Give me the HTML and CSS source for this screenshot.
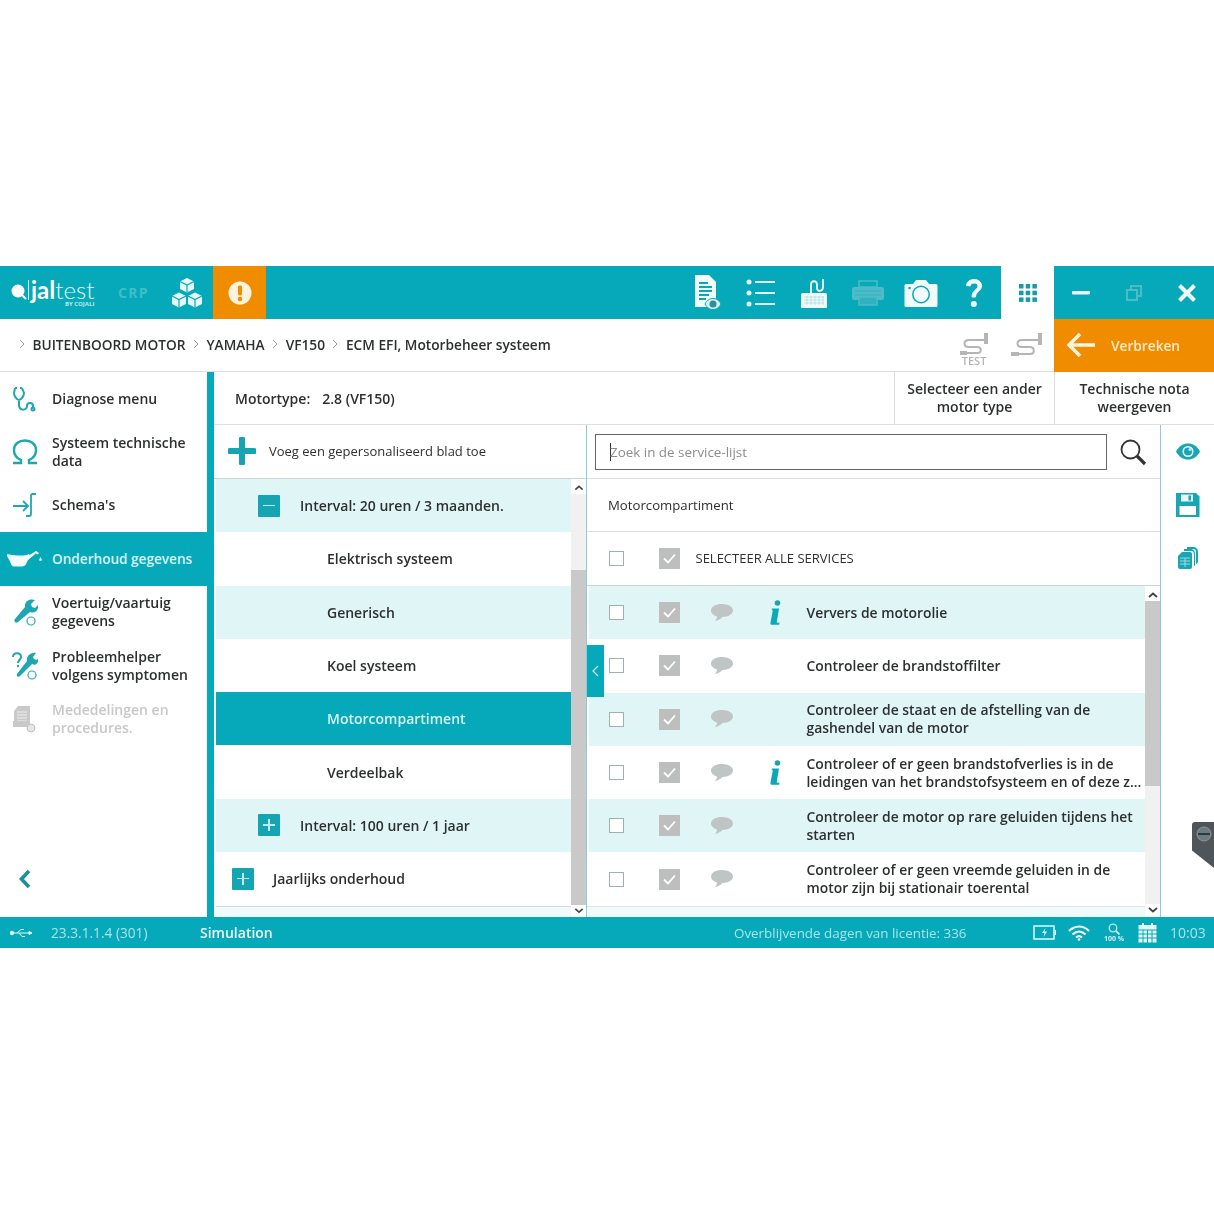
FILE: index.html
```html
<!DOCTYPE html>
<html lang="nl">
<head>
    <meta charset="UTF-8">
    <title>Jaltest - Onderhoud gegevens</title>
    <link rel="stylesheet" href="styles.css">
</head>
<body>
    <svg class="sprite" width="0" height="0">
        <symbol id="bubble" viewBox="0 0 24 20">
            <path d="M12 1C5.800 1 1 3.700 1 7.500c0 2.700 2.500 5 6 5.900 0 1.700-.8 3.300-2 4.600 3-.5 5.600-2 7.300-4 6 0 10.700-2.900 10.700-6.500S18.200 1 12 1z" fill="#bfc4c4"/>
        </symbol>
        <symbol id="info" viewBox="0 0 14 26">
            <circle cx="8.500" cy="3" r="2.800" fill="#2a9ea8"/>
            <path d="M3 8.500h7L7.800 21.500c-.2 1.300.5 1.500 2.700.9l-.3 2.300H3.200c-1.500 0-2-.8-1.700-2.300L3.800 10.500 2.800 10z" fill="#0aa9b8"/>
        </symbol>
        <symbol id="chev-up" viewBox="0 0 10 6">
            <path d="M1 5l4-3.500L9 5" fill="none" stroke="#444" stroke-width="1.800"/>
        </symbol>
        <symbol id="chev-down" viewBox="0 0 10 6">
            <path d="M1 1l4 3.500L9 1" fill="none" stroke="#444" stroke-width="1.800"/>
        </symbol>
    </svg>

    <div class="app">
        <header class="topbar">
            <div class="logo">
                <svg class="logo-mark" width="18" height="24" viewBox="0 0 18 24"><circle cx="8" cy="10" r="6.500" fill="#fff"/><path d="M12 14l4 4" stroke="#fff" stroke-width="2"/></svg>
                <div class="logo-text"><span class="logo-name"><b>jal</b>test</span><span class="logo-by">BY COJALI</span></div>
            </div>
            <div class="crp">CRP</div>
            <div class="tool">
                <svg width="34" height="32" viewBox="0 0 34 32" fill="#e6f7f8"><path d="M17 1l7 3.500v7.500l-7 3.500-7-3.500V4.500z"/><path d="M9 15.500l7 3.500v8l-7 3.500-7-3.500v-8z"/><path d="M25 15.500l7 3.500v8l-7 3.500-7-3.500v-8z"/><path d="M10 4.500l7 3.500 7-3.500M2 19l7 3.500 7-3.500M18 19l7 3.500 7-3.500M17 8v7M9 22.500v8M25 22.500v8" fill="none" stroke="#06a9b9" stroke-width="1.200"/></svg>
            </div>
            <div class="alert">
                <svg width="24" height="24" viewBox="0 0 24 24"><circle cx="12" cy="12" r="11.500" fill="#fdf3dc"/><rect x="10" y="4.500" width="4" height="10" rx="1.500" fill="#f08c00"/><circle cx="12" cy="18" r="2.200" fill="#f08c00"/></svg>
            </div>
            <div class="spacer"></div>
            <div class="tool">
                <svg width="30" height="36" viewBox="0 0 30 36"><path d="M2 0h14l7 7v25H2z" fill="#f2fbfc"/><path d="M6 8h9M6 12h13M6 16h13M6 20h10M6 24h7" stroke="#06a9b9" stroke-width="1.800"/><path d="M12 29c2-4 5-5.500 8-5.500s6 1.500 8 5.500c-2 4-5 5.500-8 5.500s-6-1.500-8-5.500z" fill="#d9eef0" stroke="#06a9b9"/><circle cx="20" cy="29" r="3.500" fill="#2c8f9a"/></svg>
            </div>
            <div class="tool">
                <svg width="30" height="30" viewBox="0 0 30 30" fill="#e6f7f8"><circle cx="3" cy="4" r="2.500"/><circle cx="3" cy="15" r="2.500"/><circle cx="3" cy="26" r="2.500"/><rect x="9" y="3" width="20" height="2"/><rect x="9" y="14" width="20" height="2"/><rect x="9" y="25" width="20" height="2"/></svg>
            </div>
            <div class="tool">
                <svg width="28" height="32" viewBox="0 0 28 32"><path d="M1 18a2 2 0 012-2h22a2 2 0 012 2v12a1 1 0 01-1 1H2a1 1 0 01-1-1z" fill="#f2fbfc"/><path d="M4 20h20M4 23h20M4 26h20M7 19v9M11 19v9M15 19v9M19 19v9M23 19v9" stroke="#a7d9de" stroke-width=".7"/><path d="M11 16V8c0-5 6-5 6 0v3c0 4 6 4 6-1V2" fill="none" stroke="#f2fbfc" stroke-width="1.800"/></svg>
            </div>
            <div class="tool">
                <svg width="34" height="26" viewBox="0 0 34 26"><path d="M8 1h18v6H8z" fill="none" stroke="#4dbcc8" stroke-width="1.500"/><rect x="1" y="7" width="32" height="13" rx="2" fill="#4dbcc8"/><path d="M4 11h26M4 15h26" stroke="#2fb2c0"/><path d="M8 17h18v8H8z" fill="#2fb2c0" stroke="#4dbcc8" stroke-width="1.500"/></svg>
            </div>
            <div class="tool">
                <svg width="34" height="28" viewBox="0 0 34 28"><path d="M2 5h7l3-4h10l3 4h7a1.500 1.500 0 011.500 1.500v20A1.500 1.500 0 0132 28H2a1.500 1.500 0 01-1.500-1.500v-20A1.500 1.500 0 012 5z" fill="#f2fbfc"/><circle cx="17" cy="15.500" r="9" fill="#06a9b9"/><circle cx="17" cy="15.500" r="7.500" fill="#f2fbfc"/><circle cx="5.500" cy="9" r="1.300" fill="#06a9b9"/></svg>
            </div>
            <div class="tool">
                <svg width="20" height="32" viewBox="0 0 20 32"><path d="M2.500 8.500C3 4.500 6 2.500 10 2.500s7.500 2.300 7.500 6.300c0 5.700-6 5.500-6 11.200H8c0-7 6-7.200 6-11 0-2-1.700-3-3.800-3s-3.700 1-4 3z" fill="#f2fbfc" stroke="#f2fbfc"/><circle cx="9.800" cy="27" r="3" fill="#f2fbfc"/></svg>
            </div>
            <div class="apps">
                <svg width="18" height="18" viewBox="0 0 18 18" fill="#199aa8"><rect width="4.500" height="4.500"/><rect x="6.700" width="4.500" height="4.500"/><rect x="13.400" width="4.500" height="4.500"/><rect y="6.700" width="4.500" height="4.500"/><rect x="6.700" y="6.700" width="4.500" height="4.500"/><rect x="13.400" y="6.700" width="4.500" height="4.500"/><rect y="13.400" width="4.500" height="4.500"/><rect x="6.700" y="13.400" width="4.500" height="4.500"/><rect x="13.400" y="13.400" width="4.500" height="4.500"/></svg>
            </div>
            <div class="window-btns">
                <div class="tool"><svg width="18" height="4" viewBox="0 0 18 4"><rect width="18" height="3.500" rx="1" fill="#e6f7f8"/></svg></div>
                <div class="tool"><svg width="16" height="16" viewBox="0 0 16 16" fill="none" stroke="#4dbcc8" stroke-width="2"><rect x="5" y="1" width="10" height="10"/><rect x="1" y="5" width="10" height="10" fill="#06a9b9"/></svg></div>
                <div class="tool"><svg width="20" height="20" viewBox="0 0 20 20"><path d="M2.500 2.500l15 15M17.500 2.500l-15 15" stroke="#f2fbfc" stroke-width="4"/></svg></div>
            </div>
        </header>

        <div class="crumbbar">
            <nav class="crumbs">
                <svg class="crumb-sep" width="6" height="10" viewBox="0 0 6 10"><path d="M1 1l4 4-4 4" fill="none" stroke="#999"/></svg>
                <span>BUITENBOORD MOTOR</span>
                <svg class="crumb-sep" width="6" height="10" viewBox="0 0 6 10"><path d="M1 1l4 4-4 4" fill="none" stroke="#999"/></svg>
                <span>YAMAHA</span>
                <svg class="crumb-sep" width="6" height="10" viewBox="0 0 6 10"><path d="M1 1l4 4-4 4" fill="none" stroke="#999"/></svg>
                <span>VF150</span>
                <svg class="crumb-sep" width="6" height="10" viewBox="0 0 6 10"><path d="M1 1l4 4-4 4" fill="none" stroke="#999"/></svg>
                <span>ECM EFI, Motorbeheer systeem</span>
            </nav>
            <div class="spacer"></div>
            <div class="tool">
                <div class="test-icon">
                    <svg width="30" height="24" viewBox="0 0 30 24" fill="none" stroke="#b5b5b5" stroke-width="2"><path d="M26 8H10c-6 0-6 7 0 7h8c5 0 5 6 0 6H8"/><rect x="25" y="1" width="4" height="11" fill="#b5b5b5" stroke="none"/><rect x="1" y="19" width="7" height="4" fill="#b5b5b5" stroke="none"/></svg>
                    <span>TEST</span>
                </div>
            </div>
            <div class="tool">
                <svg width="34" height="28" viewBox="0 0 34 28" fill="none" stroke="#b5b5b5" stroke-width="2"><path d="M28 8H12c-6 0-6 7 0 7h8c5 0 5 7 0 7H9"/><rect x="28" y="1" width="4" height="12" fill="#b5b5b5" stroke="none"/><rect x="1" y="20" width="8" height="4" fill="#b5b5b5" stroke="none"/></svg>
            </div>
            <div class="disconnect">
                <svg width="30" height="26" viewBox="0 0 30 26" fill="none" stroke="#fdf3dc" stroke-width="3.500"><path d="M29 13H4M14 2L3 13l11 11"/></svg>
                <span>Verbreken</span>
            </div>
        </div>

        <div class="content">
            <aside class="sidebar">
                <div class="side-item">
                    <svg width="24" height="26" viewBox="0 0 24 26" fill="none" stroke="#1ea6b3" stroke-width="2"><path d="M3 2l-1 5c0 3 3 7 5 7s5-4 5-7l-2-5M3 2h2M8 2h2M7 14v5c0 6 8 6 8 1 0-4 6-4 6 0v2"/><circle cx="21" cy="23" r="1.500"/></svg>
                    <span>Diagnose menu</span>
                </div>
                <div class="side-item">
                    <svg width="26" height="26" viewBox="0 0 26 26" fill="none" stroke="#1ea6b3" stroke-width="2.400"><path d="M1 24h8v-3C4 19 2 15 2 11 2 5 7 1.500 13 1.500S24 5 24 11c0 4-2 8-7 10v3h8"/></svg>
                    <span>Systeem technische data</span>
                </div>
                <div class="side-item">
                    <svg width="26" height="26" viewBox="0 0 26 26" fill="none" stroke="#1ea6b3" stroke-width="1.800"><path d="M1 14h15M11 9l5 5-5 5M24 2h-3c-1 0-2 1-2 2v18c0 1-1 2-2 2h-3"/></svg>
                    <span>Schema's</span>
                </div>
                <div class="side-item active">
                    <svg width="36" height="18" viewBox="0 0 36 18" fill="#f2fbfc"><path d="M1 4c5 1 10 1.500 14 1.500 3 0 6-.5 8-1.500l1 2-4 8c-.7 1.500-2 2.500-4 2.500H8c-2 0-3-2-4-5L1 6z"/><path d="M21 6.500L30 1l3 2-1.200 1.500-2-1L22 10z"/><path d="M34.500 7l1.500 3a1.600 1.600 0 01-3 0z"/></svg>
                    <span>Onderhoud gegevens</span>
                </div>
                <div class="side-item">
                    <svg width="26" height="28" viewBox="0 0 26 28"><path d="M23 2l-4 4 1 3 3 1 3-3c1 5-3 9-8 7L6 24c-2 2-5-1-3-3L13 9c-1-5 4-9 10-7z" fill="#1ea6b3"/><circle cx="19" cy="23" r="4" fill="none" stroke="#2aa8b4" stroke-width="1.200"/></svg>
                    <span>Voertuig/vaartuig gegevens</span>
                </div>
                <div class="side-item">
                    <svg width="26" height="28" viewBox="0 0 26 28"><path d="M24 1l-3 4 1 2 3 1 1-2c1 5-2 8-6 6L8 24c-2 2-4 0-3-2L15 9c-1-5 4-9 9-8z" fill="#1ea6b3"/><path d="M1 5c0-5 8-5 8 0 0 3-3 3-3 6" fill="none" stroke="#1ea6b3" stroke-width="2"/><circle cx="6" cy="14" r="1.200" fill="#1ea6b3"/><circle cx="20" cy="23" r="4" fill="none" stroke="#2aa8b4" stroke-width="1.200"/></svg>
                    <span>Probleemhelper volgens symptomen</span>
                </div>
                <div class="side-item disabled">
                    <svg width="24" height="28" viewBox="0 0 24 28"><path d="M6 1h12v20H2V6z" fill="#c9c9c9"/><path d="M5 7h10M5 10h10M5 13h10M5 16h10" stroke="#f0f0f0"/><path d="M1 16h15v6H1z" fill="#c9c9c9"/><circle cx="19" cy="23" r="4" fill="#e6e6e6" stroke="#c0c0c0"/></svg>
                    <span>Mededelingen en procedures.</span>
                </div>
                <div class="spacer"></div>
                <div class="side-back">
                    <svg width="14" height="20" viewBox="0 0 14 20" fill="none"><path d="M11 2L3.500 10l7.500 8" stroke="#1b8f9b" stroke-width="3.600"/></svg>
                </div>
            </aside>

            <main class="work">
                <div class="motor-row">
                    <div class="motor-type"><span>Motortype:</span><span>2.8 (VF150)</span></div>
                    <div class="motor-btn">Selecteer een ander motor type</div>
                    <div class="motor-btn">Technische nota weergeven</div>
                </div>

                <div class="panels">
                    <section class="tree-panel">
                        <div class="add-row">
                            <svg width="28" height="28" viewBox="0 0 28 28"><path d="M14 2v24M2 14h24" stroke="#15a4b2" stroke-width="6" stroke-linecap="round"/></svg>
                            <span>Voeg een gepersonaliseerd blad toe</span>
                        </div>
                        <div class="tree-body">
                            <div class="tree-list">
                                <div class="tree-row tint level-1"><div class="toggle"><i class="minus"></i></div><span>Interval: 20 uren / 3 maanden.</span></div>
                                <div class="tree-row level-2"><span>Elektrisch systeem</span></div>
                                <div class="tree-row tint level-2"><span>Generisch</span></div>
                                <div class="tree-row level-2"><span>Koel systeem</span></div>
                                <div class="tree-row selected level-2"><span>Motorcompartiment</span></div>
                                <div class="tree-row level-2"><span>Verdeelbak</span></div>
                                <div class="tree-row tint level-1"><div class="toggle"><i class="minus"></i><i class="vert"></i></div><span>Interval: 100 uren / 1 jaar</span></div>
                                <div class="tree-row level-0"><div class="toggle"><i class="minus"></i><i class="vert"></i></div><span>Jaarlijks onderhoud</span></div>
                                <div class="tree-foot"></div>
                            </div>
                            <div class="scrollbar tree-scroll">
                                <svg width="10" height="6"><use href="#chev-up"/></svg>
                                <div class="track"><div class="thumb"></div></div>
                                <svg width="10" height="6"><use href="#chev-down"/></svg>
                            </div>
                        </div>
                    </section>

                    <section class="service-panel">
                        <div class="search-row">
                            <div class="search-box"><span class="caret"></span>Zoek in de service-lijst</div>
                            <svg width="28" height="28" viewBox="0 0 28 28" fill="none" stroke="#333"><circle cx="11.500" cy="11.500" r="9" stroke-width="1.800"/><path d="M18 18l8 8" stroke-width="3.200"/></svg>
                        </div>
                        <div class="group-title">Motorcompartiment</div>
                        <div class="select-all">
                            <div class="box"></div>
                            <div class="check"><svg width="13" height="11" viewBox="0 0 13 11"><path d="M1 5.500l4 4 7-8" fill="none" stroke="#fff" stroke-width="1.800"/></svg></div>
                            <span>SELECTEER ALLE SERVICES</span>
                        </div>
                        <div class="service-body">
                            <div class="service-list">
                                <div class="service-row tint">
                                    <div class="box"></div>
                                    <div class="check"><svg width="13" height="11" viewBox="0 0 13 11"><path d="M1 5.500l4 4 7-8" fill="none" stroke="#fff" stroke-width="1.800"/></svg></div>
                                    <svg class="bubble" width="24" height="20"><use href="#bubble"/></svg>
                                    <div class="info-slot"><svg width="14" height="26"><use href="#info"/></svg></div>
                                    <p>Ververs de motorolie</p>
                                </div>
                                <div class="service-row">
                                    <div class="box"></div>
                                    <div class="check"><svg width="13" height="11" viewBox="0 0 13 11"><path d="M1 5.500l4 4 7-8" fill="none" stroke="#fff" stroke-width="1.800"/></svg></div>
                                    <svg class="bubble" width="24" height="20"><use href="#bubble"/></svg>
                                    <div class="info-slot"></div>
                                    <p>Controleer de brandstoffilter</p>
                                </div>
                                <div class="service-row tint">
                                    <div class="box"></div>
                                    <div class="check"><svg width="13" height="11" viewBox="0 0 13 11"><path d="M1 5.500l4 4 7-8" fill="none" stroke="#fff" stroke-width="1.800"/></svg></div>
                                    <svg class="bubble" width="24" height="20"><use href="#bubble"/></svg>
                                    <div class="info-slot"></div>
                                    <p>Controleer de staat en de afstelling van de gashendel van de motor</p>
                                </div>
                                <div class="service-row">
                                    <div class="box"></div>
                                    <div class="check"><svg width="13" height="11" viewBox="0 0 13 11"><path d="M1 5.500l4 4 7-8" fill="none" stroke="#fff" stroke-width="1.800"/></svg></div>
                                    <svg class="bubble" width="24" height="20"><use href="#bubble"/></svg>
                                    <div class="info-slot"><svg width="14" height="26"><use href="#info"/></svg></div>
                                    <p>Controleer of er geen brandstofverlies is in de<br>leidingen van het brandstofsysteem en of deze z...</p>
                                </div>
                                <div class="service-row tint">
                                    <div class="box"></div>
                                    <div class="check"><svg width="13" height="11" viewBox="0 0 13 11"><path d="M1 5.500l4 4 7-8" fill="none" stroke="#fff" stroke-width="1.800"/></svg></div>
                                    <svg class="bubble" width="24" height="20"><use href="#bubble"/></svg>
                                    <div class="info-slot"></div>
                                    <p>Controleer de motor op rare geluiden tijdens het starten</p>
                                </div>
                                <div class="service-row">
                                    <div class="box"></div>
                                    <div class="check"><svg width="13" height="11" viewBox="0 0 13 11"><path d="M1 5.500l4 4 7-8" fill="none" stroke="#fff" stroke-width="1.800"/></svg></div>
                                    <svg class="bubble" width="24" height="20"><use href="#bubble"/></svg>
                                    <div class="info-slot"></div>
                                    <p>Controleer of er geen vreemde geluiden in de motor zijn bij stationair toerental</p>
                                </div>
                                <div class="service-foot"></div>
                            </div>
                            <div class="scrollbar service-scroll">
                                <svg width="10" height="6"><use href="#chev-up"/></svg>
                                <div class="track"><div class="thumb"></div></div>
                                <svg width="10" height="6"><use href="#chev-down"/></svg>
                            </div>
                        </div>
                        <div class="collapse-tab">
                            <svg width="7" height="12" viewBox="0 0 7 12"><path d="M6 1L1 6l5 5" fill="none" stroke="#cdeef1" stroke-width="1.200"/></svg>
                        </div>
                    </section>

                    <aside class="rail">
                        <div class="rail-btn">
                            <svg width="26" height="17" viewBox="0 0 26 17"><path d="M1 8.500C4 3 8 .5 13 .5s9 2.500 12 8c-3 5.500-7 8-12 8s-9-2.500-12-8z" fill="#17a6b4"/><circle cx="13" cy="8.500" r="5.500" fill="#fff"/><circle cx="13" cy="8.500" r="4" fill="#17a6b4"/><circle cx="15" cy="6.500" r="1.500" fill="#bfe9ed"/></svg>
                        </div>
                        <div class="rail-btn">
                            <svg width="25" height="26" viewBox="0 0 25 26"><path d="M1 1h20l3.500 3.500V25H1z" fill="#17a6b4"/><rect x="6" y="2.500" width="12" height="7" fill="#e9f8f9"/><rect x="13.500" y="3.500" width="2.500" height="5" fill="#17a6b4"/><rect x="4.500" y="14" width="16.500" height="9" fill="#fff"/></svg>
                        </div>
                        <div class="rail-btn">
                            <svg width="20" height="22" viewBox="0 0 20 22" fill="#17a6b4"><path d="M9 0h6c3 0 5 2 5 5v9c0 2-1 3-2 3V5c0-2-1-3-3-3H9z"/><path d="M6 2h7c2 0 4 2 4 4v11c0 1 0 2-1 2V7c0-2-1-3-3-3H6z"/><path d="M4 5h8a2 2 0 012 2v13a2 2 0 01-2 2H2a2 2 0 01-2-2V9z"/><path d="M2 11h10M2 14h10M2 17h10M7 11v9" stroke="#bfe9ed" stroke-width=".8"/></svg>
                        </div>
                    </aside>
                </div>
            </main>
        </div>

        <footer class="statusbar">
            <svg class="usb" width="22" height="10" viewBox="0 0 22 10" fill="none" stroke="#e6f7f8"><circle cx="2" cy="5" r="1.800" fill="#e6f7f8"/><path d="M3 5h17M7 5l4-3.500h3M9 5l3 3.500h3"/><path d="M19 3.500l3 1.500-3 1.500z" fill="#e6f7f8"/></svg>
            <span class="version">23.3.1.1.4 (301)</span>
            <span class="sim">Simulation</span>
            <span class="license">Overblijvende dagen van licentie: 336</span>
            <div class="status-icons">
                <svg width="23" height="15" viewBox="0 0 23 15" fill="none" stroke="#e6f7f8" stroke-width="1.500"><rect x="1" y="1" width="20" height="13"/><path d="M22.500 5v5"/><path d="M12.500 3L9 8h2.500l-1 4 3.500-5.500h-2.500z" fill="#e6f7f8" stroke="none"/></svg>
                <svg width="22" height="16" viewBox="0 0 22 16" fill="none" stroke="#f2fbfc" stroke-width="2.200"><path d="M1 6c6-6 14-6 20 0M4.500 9.500c4-4 9-4 13 0M8 12.500c2-1.700 4-1.700 6 0"/><circle cx="11" cy="14.500" r="1.300" fill="#f2fbfc" stroke="none"/></svg>
                <div class="zoom-level">
                    <svg width="12" height="12" viewBox="0 0 12 12" fill="none" stroke="#bfe9ed" stroke-width="1.300"><circle cx="5" cy="5" r="3.800"/><path d="M8 8l3.500 3.500" stroke-width="1.800"/></svg>
                    <span>100 %</span>
                </div>
                <svg width="19" height="20" viewBox="0 0 19 20"><rect x="0.500" y="2" width="18" height="17.500" fill="#e6f7f8"/><path d="M0 7h19M0 11h19M0 15h19M5 7v13M9.500 7v13M14 7v13" stroke="#06a9b9"/><path d="M5 0v4M14 0v4" stroke="#e6f7f8" stroke-width="2"/></svg>
            </div>
            <span class="clock">10:03</span>
        </footer>

        <div class="remote-tab">
            <svg width="16" height="16" viewBox="0 0 16 16"><circle cx="8" cy="8" r="7" fill="#6d7a80" stroke="#8b979c"/><path d="M2 8h12" stroke="#2c3a40" stroke-width="2"/></svg>
        </div>
    </div>
</body>
</html>
```

FILE: styles.css
```css
* {
    margin: 0;
    padding: 0;
    box-sizing: border-box;
}

body {
    font-family: "Open Sans", "Liberation Sans", sans-serif;
    font-size: 14px;
    color: #2d3031;
    background: #fff;
    padding-top: 266px;
}

.sprite {
    position: absolute;
}

.app {
    position: relative;
    width: 1214px;
    height: 682px;
    display: flex;
    flex-direction: column;
    filter: blur(0.35px);
}

.spacer {
    flex: 1;
}

.tool {
    width: 53.3px;
    height: 53px;
    display: flex;
    align-items: center;
    justify-content: center;
    flex-shrink: 0;
}

/* header */
.topbar {
    height: 53px;
    display: flex;
    background: #06a9b9;
    flex-shrink: 0;
}

.logo {
    width: 117px;
    display: flex;
    align-items: center;
    padding-left: 10px;
}

.logo-mark {
    flex-shrink: 0;
}

.logo-text {
    display: flex;
    flex-direction: column;
    align-items: flex-end;
    margin-top: 3px;
}

.logo-name {
    font-family: "Lato", sans-serif;
    font-size: 24px;
    line-height: 20px;
    font-weight: 300;
    color: #e6f7f8;
    border-left: 1.5px solid #e6f7f8;
    padding-left: 2px;
}

.logo-name b {
    font-weight: 700;
    color: #fff;
}

.logo-by {
    font-size: 6px;
    line-height: 7px;
    margin-top: 1px;
    font-weight: 700;
    color: #bfe9ed;
}

.crp {
    width: 43px;
    padding-left: 1px;
    line-height: 53px;
    font-size: 14px;
    font-weight: 700;
    letter-spacing: 1.300px;
    color: #3fbecb;
}

.alert {
    width: 53px;
    background: #f08c00;
    display: flex;
    align-items: center;
    justify-content: center;
}

.apps {
    width: 53px;
    background: #fff;
    display: flex;
    align-items: center;
    justify-content: center;
}

.window-btns {
    width: 160px;
    display: flex;
}

/* breadcrumb */
.crumbbar {
    height: 53px;
    display: flex;
    align-items: stretch;
    border-bottom: 1px solid #dcdedf;
    flex-shrink: 0;
}

.crumbs {
    display: flex;
    align-items: center;
    gap: 7.500px;
    padding-left: 19px;
    padding-bottom: 2px;
    font-weight: 600;
    font-size: 13.700px;
}

.test-icon {
    display: flex;
    flex-direction: column;
    align-items: center;
    margin-top: 5px;
}

.test-icon span {
    font-size: 11px;
    line-height: 9px;
    font-weight: 600;
    color: #b5b5b5;
}

.disconnect {
    width: 160px;
    margin-bottom: -1px;
    background: #f08c00;
    display: flex;
    align-items: center;
    gap: 15px;
    padding-left: 12px;
    padding-bottom: 1px;
    font-weight: 600;
    font-size: 13.700px;
    color: #fdeccb;
    position: relative;
}

/* content */
.content {
    flex: 1;
    display: flex;
    min-height: 0;
}

.sidebar {
    width: 214px;
    border-right: 7px solid #06a9b9;
    display: flex;
    flex-direction: column;
    flex-shrink: 0;
}

.side-item {
    height: 53.400px;
    display: flex;
    align-items: center;
    font-weight: 600;
    line-height: 18px;
    position: relative;
    padding-left: 52px;
    padding-right: 8px;
}

.side-item svg {
    position: absolute;
    left: 12px;
}

.side-item.active {
    background: #06a9b9;
    color: #d8f3f5;
    margin-right: -7px;
    font-size: 13.600px;
}

.side-item.active svg {
    left: 6px;
}

.side-item.disabled {
    color: #c6c8c9;
}

.side-back {
    height: 76px;
    padding-left: 18px;
    padding-bottom: 1px;
    display: flex;
    align-items: center;
}

.work {
    flex: 1;
    display: flex;
    flex-direction: column;
    min-width: 0;
}

.motor-row {
    height: 53px;
    display: flex;
    border-bottom: 1px solid #dcdedf;
    flex-shrink: 0;
}

.motor-type {
    flex: 1;
    display: flex;
    align-items: center;
    gap: 12px;
    padding-left: 21px;
    font-weight: 600;
}

.motor-btn {
    width: 160px;
    border-left: 1px solid #dcdedf;
    display: flex;
    align-items: center;
    justify-content: center;
    text-align: center;
    font-weight: 600;
    line-height: 18px;
    padding: 0 8px;
}

.panels {
    flex: 1;
    display: flex;
    min-height: 0;
}

/* tree */
.tree-panel {
    width: 372px;
    display: flex;
    flex-direction: column;
    flex-shrink: 0;
}

.add-row {
    height: 54px;
    display: flex;
    align-items: center;
    gap: 13px;
    padding-left: 14px;
    padding-bottom: 1px;
    border-bottom: 1px solid #c8d4d5;
    font-size: 13px;
    flex-shrink: 0;
}

.tree-body {
    flex: 1;
    display: flex;
    min-height: 0;
    padding-left: 2px;
}

.tree-list {
    flex: 1;
    display: flex;
    flex-direction: column;
}

.tree-row {
    height: 53.3px;
    display: flex;
    align-items: center;
    font-weight: 600;
    flex-shrink: 0;
}

.tint {
    background: #e0f5f6;
}

.level-0 {
    padding-left: 16px;
    gap: 19px;
}

.level-1 {
    padding-left: 42px;
    gap: 20px;
}

.level-2 {
    padding-left: 111px;
}

.tree-row.selected {
    background: #06a9b9;
    color: #d8f3f5;
}

.tree-foot {
    flex: 1;
    margin-top: 1px;
    border-top: 1px solid #d3dcdd;
    background: #f1fafa;
}

.toggle {
    position: relative;
    width: 22px;
    height: 22px;
    background: #15a4b2;
    flex-shrink: 0;
    border-radius: 1px;
}

.toggle .minus {
    position: absolute;
    left: 5px;
    right: 5px;
    top: 10px;
    height: 1.5px;
    background: #bfe9ed;
}

.toggle .vert {
    position: absolute;
    top: 5px;
    bottom: 5px;
    left: 10px;
    width: 1.5px;
    background: #bfe9ed;
}

.scrollbar {
    width: 15px;
    flex-shrink: 0;
    display: flex;
    flex-direction: column;
    align-items: center;
    background: #fff;
    padding: 6px 0 4px;
}

.track {
    flex: 1;
    width: 100%;
    background: #f1f1f1;
    margin: 3px 0;
}

.thumb {
    background: #c9c9c9;
}

.tree-scroll .thumb {
    margin-top: 76px;
    height: 335px;
}

.service-scroll .thumb {
    height: 185px;
}

/* services */
.service-panel {
    position: relative;
    flex: 1;
    min-width: 0;
    display: flex;
    flex-direction: column;
    border-left: 1.5px solid #8fcbd2;
    border-right: 1.5px solid #8fcbd2;
}

.search-row {
    height: 54px;
    display: flex;
    align-items: center;
    gap: 12px;
    padding-left: 8px;
    padding-top: 1px;
    border-bottom: 1px solid #dcdedf;
    flex-shrink: 0;
}

.search-box {
    width: 512px;
    height: 36px;
    border: 1.5px solid #666;
    display: flex;
    align-items: center;
    padding-left: 14px;
    font-size: 13.400px;
    color: #8a8c8d;
    position: relative;
}

.caret {
    width: 1px;
    height: 18px;
    background: #333;
    margin-right: -1px;
}

.group-title {
    height: 53px;
    line-height: 53px;
    padding-left: 21px;
    font-size: 13.200px;
    border-bottom: 1px solid #dcdedf;
    flex-shrink: 0;
}

.select-all {
    height: 54px;
    display: flex;
    align-items: center;
    padding-left: 21.500px;
    padding-bottom: 1px;
    border-bottom: 1px solid #c8d4d5;
    flex-shrink: 0;
}

.select-all span {
    margin-left: 16px;
    font-size: 13px;
}

.box {
    width: 15px;
    height: 15px;
    border: 1.5px solid #9fb0b2;
    background: #fff;
    flex-shrink: 0;
}

.check {
    width: 21px;
    height: 21px;
    margin-left: 35px;
    background: #bdbfbf;
    display: flex;
    align-items: center;
    justify-content: center;
    flex-shrink: 0;
}

.service-body {
    flex: 1;
    display: flex;
    min-height: 0;
}

.service-list {
    flex: 1;
    display: flex;
    flex-direction: column;
    min-width: 0;
}

.service-row {
    height: 53.3px;
    display: flex;
    align-items: center;
    padding-left: 21.500px;
    flex-shrink: 0;
}

.service-row.tint {
    margin-left: 2px;
    padding-left: 19.500px;
}

.bubble {
    margin-left: 30px;
    flex-shrink: 0;
}

.info-slot {
    width: 73px;
    padding-left: 35px;
    height: 26px;
    flex-shrink: 0;
}

.service-row p {
    font-weight: 600;
    font-size: 13.900px;
    line-height: 18px;
}

.service-foot {
    flex: 1;
    background: #f1fafa;
    border-top: 1px solid #dfe6e6;
}

.collapse-tab {
    position: absolute;
    left: 0;
    top: 220px;
    width: 17px;
    height: 52px;
    background: #06a9b9;
    display: flex;
    align-items: center;
    justify-content: center;
}

.rail {
    width: 53px;
    flex-shrink: 0;
    display: flex;
    flex-direction: column;
}

.rail-btn {
    height: 53.3px;
    display: flex;
    align-items: center;
    justify-content: center;
}

/* status bar */
.statusbar {
    height: 31px;
    background: #06a9b9;
    display: flex;
    align-items: center;
    color: #a9e3e9;
    flex-shrink: 0;
    padding-left: 10px;
    position: relative;
}

.version {
    margin-left: 19px;
    width: 149px;
    font-size: 13.700px;
}

.sim {
    font-weight: 600;
    color: #eef9fa;
    width: 534px;
}

.license {
    width: 299px;
    font-size: 13.400px;
}

.status-icons {
    display: flex;
    align-items: center;
    gap: 12px;
    width: 137px;
}

.zoom-level {
    width: 24px;
    display: flex;
    flex-direction: column;
    align-items: center;
}

.zoom-level span {
    font-size: 7px;
    line-height: 8px;
    font-weight: 700;
    color: #cdeef1;
    white-space: nowrap;
}

.remote-tab {
    position: absolute;
    right: 0;
    top: 556px;
    width: 22px;
    height: 46px;
    background: #4f5559;
    clip-path: polygon(0 0, 100% 0, 100% 100%, 0 62%);
    border-radius: 3px 0 0 0;
    padding: 4px 0 0 4px;
}
```
